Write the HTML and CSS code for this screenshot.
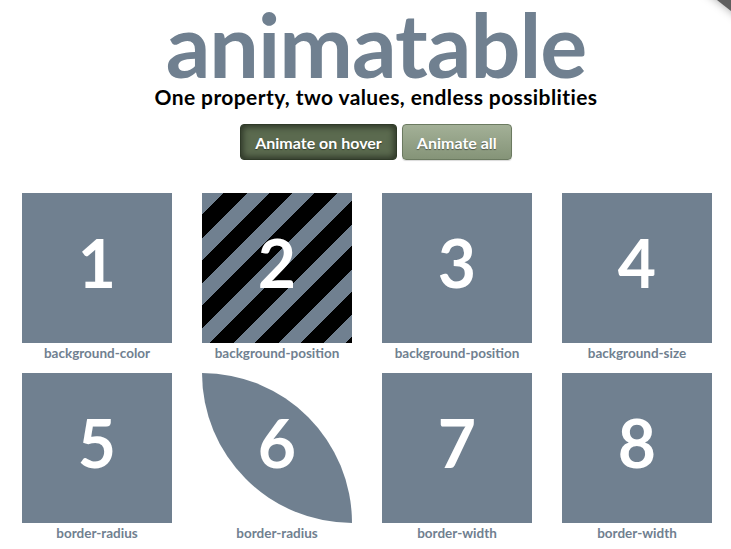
FILE: index.html
```html
<!DOCTYPE html>
<html lang="en">
<head>
<meta charset="utf-8">
<title>animatable</title>
<link rel="stylesheet" href="styles.css">
</head>
<body>
<div class="corner"></div>
<header class="head">
  <h1 class="title">animatable</h1>
  <p class="tagline">One property, two values, endless possiblities</p>
  <div class="buttons">
    <button class="btn btn-active">Animate on hover</button>
    <button class="btn">Animate all</button>
  </div>
</header>
<main class="grid">
  <figure class="item"><div class="box">1</div><figcaption class="label">background-color</figcaption></figure>
  <figure class="item"><div class="box box-stripes">2</div><figcaption class="label">background-position</figcaption></figure>
  <figure class="item"><div class="box">3</div><figcaption class="label">background-position</figcaption></figure>
  <figure class="item"><div class="box">4</div><figcaption class="label">background-size</figcaption></figure>
  <figure class="item"><div class="box">5</div><figcaption class="label">border-radius</figcaption></figure>
  <figure class="item"><div class="box box-leaf">6</div><figcaption class="label">border-radius</figcaption></figure>
  <figure class="item"><div class="box">7</div><figcaption class="label">border-width</figcaption></figure>
  <figure class="item"><div class="box">8</div><figcaption class="label">border-width</figcaption></figure>
</main>
</body>
</html>
```
FILE: styles.css
```css
html, body {
  margin: 0;
  padding: 0;
  background: #fff;
}
body {
  font-family: Lato, "Noto Sans", sans-serif;
  overflow: hidden;
  position: relative;
  width: 731px;
  height: 549px;
}
.corner {
  position: absolute;
  top: -14px;
  right: -30px;
  width: 60px;
  height: 22px;
  background: #5e5e5e;
  transform: rotate(38deg);
  box-shadow: 0 0 10px rgba(0,0,0,0.35);
}
.head {
  text-align: center;
  padding-left: 21px;
}
.title {
  margin: 0;
  padding-top: 4px;
  font-size: 88px;
  line-height: 81px;
  font-weight: 700;
  color: #708090;
  letter-spacing: -1px;
}
.tagline {
  margin: 0;
  font-size: 21px;
  line-height: 24px;
  font-weight: 700;
  color: #000;
  letter-spacing: 0.4px;
}
.buttons {
  display: flex;
  justify-content: center;
  gap: 5px;
  margin-top: 15px;
}
.btn {
  font-family: Lato, "Noto Sans", sans-serif;
  font-size: 16px;
  font-weight: 700;
  color: #fff;
  height: 36px;
  padding: 0 14px;
  border: 1px solid #6b7a60;
  border-radius: 4px;
  background: linear-gradient(#a3b097, #859478);
  text-shadow: 0 1px 1px rgba(0,0,0,0.45);
  box-shadow: 0 1px 1px rgba(0,0,0,0.15);
}
.btn-active {
  border-color: #2f3a28;
  background: #5b6a4f;
  box-shadow: inset 0 0 6px 2px #2c3526;
}
.grid {
  display: grid;
  grid-template-columns: repeat(4, 150px);
  column-gap: 30px;
  margin: 33px 0 0 22px;
}
.item {
  margin: 0;
  height: 180px;
}
.box {
  width: 150px;
  height: 150px;
  background: #708090;
  color: #fff;
  font-size: 66px;
  font-weight: 700;
  line-height: 140px;
  text-align: center;
}
.box-stripes {
  background: repeating-linear-gradient(135deg, #708090 0, #708090 15.5px, #000 15.5px, #000 32px);
}
.box-leaf {
  border-radius: 0 150px 0 150px;
}
.label {
  text-align: center;
  font-size: 13.5px;
  line-height: 20px;
  font-weight: 700;
  color: #708090;
}
```
